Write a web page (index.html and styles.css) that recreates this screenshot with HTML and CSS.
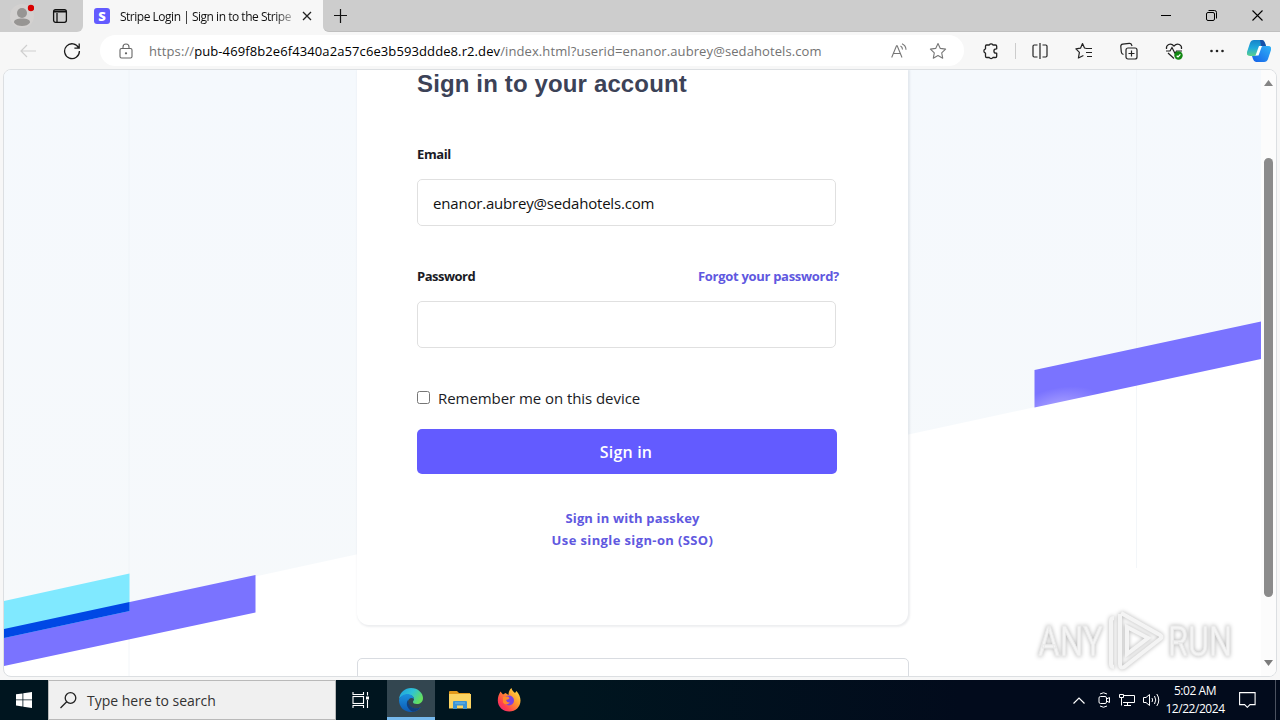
FILE: index.html
```
<!DOCTYPE html>
<html lang="en">
<head>
<meta charset="utf-8">
<title>Desktop</title>
<link rel="stylesheet" href="styles.css">
</head>
<body>

<div class="desktop">
  <!-- Tab strip -->
  <div class="tab-strip">
    <div class="strip-left">
      <svg class="profile" width="24" height="24" viewBox="0 0 24 24">
        <circle cx="12" cy="12" r="12" fill="#d3d1d0"/>
        <circle cx="12" cy="9" r="5" fill="#979593"/>
        <path d="M4 18.500c0-3 3-4 8-4s8 1 8 4c-1.500 2.500-4.500 3.500-8 3.500s-6.500-1-8-3.500z" fill="#979593"/>
        <circle cx="21" cy="4" r="3.200" fill="#d90000"/>
      </svg>
      <svg class="tab-actions" width="16" height="16" viewBox="0 0 16 16" fill="none" stroke="#111" stroke-width="1.300">
        <rect x="1.600" y="1.700" width="12.800" height="12.600" rx="2"/>
        <path d="M2 3.500h12" stroke-width="2"/>
        <path d="M5 5v9"/>
      </svg>
    </div>
    <div class="tab">
      <span class="favicon">S</span>
      <span class="tab-title">Stripe Login | Sign in to the Stripe</span>
      <svg width="10" height="10" viewBox="0 0 10 10" stroke="#222" stroke-width="1.300"><path d="M1 1l8 8M9 1l-8 8"/></svg>
    </div>
    <div class="strip-rest">
      <svg width="14" height="14" viewBox="0 0 14 14" stroke="#111" stroke-width="1.200"><path d="M6.500 0v14M0 6.500h13"/></svg>
      <div class="window-buttons">
        <svg width="10" height="11" viewBox="0 0 10 11" stroke="#000"><path d="M0 5.500h10"/></svg>
        <svg width="11" height="11" viewBox="0 0 11 11" fill="none" stroke="#000"><rect x=".5" y="2.500" width="8" height="8" rx="1.500"/><path d="M2.500 .5h6q2 0 2 2v6"/></svg>
        <svg width="11" height="11" viewBox="0 0 11 11" stroke="#000" stroke-width="1.100"><path d="M.5 .5l10 10M10.500 .5l-10 10"/></svg>
      </div>
    </div>
  </div>

  <!-- Toolbar -->
  <div class="toolbar">
    <svg class="back" width="16" height="14" viewBox="0 0 16 14" fill="none" stroke="#cfcfcf" stroke-width="1.200"><path d="M16 7H1M7 1L1 7l6 6"/></svg>
    <svg class="reload" width="18" height="18" viewBox="0 0 18 18" fill="none" stroke="#1b1b1b" stroke-width="1.300"><path d="M15.700 6A7.400 7.400 0 1 0 16.400 9M16.200 1.500V6.200h-4.800"/></svg>
    <div class="address">
      <svg width="14" height="16" viewBox="0 0 14 16" fill="none" stroke="#666" stroke-width="1.100"><rect x="1" y="5.500" width="12" height="9.500" rx="1.500"/><path d="M4 5.500V4a3 3 0 0 1 6 0v1.500"/><circle cx="7" cy="10.300" r=".6" fill="#666"/></svg>
      <span class="url">https://<b>pub-469f8b2e6f4340a2a57c6e3b593ddde8.r2.dev</b>/index.html?userid=enanor.aubrey@sedahotels.com</span>
      <svg class="read-aloud" width="16" height="16" viewBox="0 0 16 16" fill="none" stroke="#777" stroke-width="1.100"><path d="M.7 14.500L5.500 2.700h.7L11 14.500M2.300 10.500h7M9.500 3q2 1 2 3.500M11 .7q4 1.800 4 6"/></svg>
      <svg width="18" height="18" viewBox="0 0 18 18" fill="none" stroke="#777" stroke-width="1.100" stroke-linejoin="round"><path d="M9 1.500l2.300 4.900 5.300.7-3.900 3.700 1 5.400L9 13.600l-4.700 2.600 1-5.400L1.400 7.100l5.300-.7z"/></svg>
    </div>
    <div class="tools">
      <svg width="18" height="18" viewBox="0 0 18 18" fill="none" stroke="#222" stroke-width="1.300" stroke-linejoin="round"><path d="M4.500 3H7.300a2 2 0 0 1 3.600 0H13.500q1.200 0 1.200 1.200v2.600h-.6a2.200 2.200 0 0 0 0 4.400h.6v3.100q0 1.200-1.200 1.200h-2.600a2 2 0 0 1-3.600 0H4.700q-1.200 0-1.200-1.200v-3.100a2.300 2.300 0 0 1 0-4.400V4.200Q3.500 3 4.500 3z"/></svg>
      <span class="divider"></span>
      <svg width="16" height="16" viewBox="0 0 16 16" fill="none" stroke="#222" stroke-width="1.200"><path d="M5.500 2H2.200Q1 2 1 3.200v9.600Q1 14 2.200 14h3.300M10.500 2h3.300q1.200 0 1.200 1.200v9.600q0 1.200-1.200 1.200h-3.300M8 0v16"/></svg>
      <svg width="18" height="18" viewBox="0 0 18 18" fill="none" stroke="#222" stroke-width="1.200" stroke-linejoin="round"><path d="M11 6.500H17M11 10.500h6M12 14.500h5M11.500 6.500L9.500 6 7.500 1.500l-2 4.700-4.600.7 3.500 3.500-1 5.600 5-2.500"/></svg>
      <svg width="18" height="18" viewBox="0 0 18 18" fill="none" stroke="#222" stroke-width="1.200"><rect x="6" y="6" width="11" height="11" rx="2"/><path d="M11.500 8.500v6M8.500 11.500h6M3.500 12.500Q1.500 12 1.300 10L.8 4.500Q.7 2.500 2.700 2.200l6.500-.9q2-.2 2.500 1.700l.3 1"/></svg>
      <svg width="18" height="18" viewBox="0 0 18 18" fill="none" stroke="#222" stroke-width="1.200"><path d="M1.500 7C.8 3 5.500.2 9 4c3.500-3.800 8.200-1 7.500 3M1 9h4l2-3.500 3 6L11.500 9H17M3 11l6 5.500"/><circle cx="13.500" cy="13.500" r="4.200" fill="#128712" stroke="none"/><path d="M11.700 13.700l1.300 1.200 2.400-2.600" stroke="#fff"/></svg>
      <svg width="14" height="4" viewBox="0 0 14 4" fill="#222"><circle cx="1.500" cy="2" r="1.300"/><circle cx="7" cy="2" r="1.300"/><circle cx="12.500" cy="2" r="1.300"/></svg>
      <svg class="copilot" width="24" height="22" viewBox="0 0 24 22">
        <defs>
          <linearGradient id="cpA" x1="0" y1="0" x2="0" y2="1"><stop offset="0" stop-color="#1683c9"/><stop offset=".5" stop-color="#20a9dc"/><stop offset="1" stop-color="#5bd08c"/></linearGradient>
          <linearGradient id="cpB" x1="1" y1="0" x2="0" y2="1"><stop offset="0" stop-color="#2fb3f7"/><stop offset="1" stop-color="#155fe8"/></linearGradient>
        </defs>
        <path d="M7 0h8q2 0 3 3l1 3h-3q-2 0-3 2l-2 5q-1 3-4 3H3q-4 0-3-4L3 3q1-3 4-3z" fill="url(#cpA)"/>
        <path d="M13 0h2q2 0 3 3l1 3h-5z" fill="#164fa8"/>
        <path d="M17 22H9q-2 0-3-3l-1-3h3q2 0 3-3l2-5q1-2 3-2h5q4 0 3 4l-3 9q-1 3-4 3z" fill="url(#cpB)"/>
        <path d="M12 6h3l-3.500 9.500h-3z" fill="#fff"/>
      </svg>
    </div>
  </div>

  <!-- Page -->
  <div class="viewport">
    <div class="page">
      <svg class="backdrop" width="1257" height="607" viewBox="4 70 1257 607">
        <defs>
          <linearGradient id="sky" x1="0" y1="0" x2="0" y2="1"><stop offset="0" stop-color="#f5f9fd"/><stop offset="1" stop-color="#f6f9fb"/></linearGradient>
          <radialGradient id="glow" gradientUnits="userSpaceOnUse" cx="0" cy="0" r="1" gradientTransform="translate(1058 408) rotate(-12) scale(44 20)"><stop offset="0" stop-color="#aaa2ff"/><stop offset="1" stop-color="#7a73ff"/></radialGradient>
        </defs>
        <path d="M4 70H1261V358L4 631z" fill="url(#sky)"/>
        <path d="M129 70V677M1136.500 70V568" stroke="#eef2f6" stroke-opacity=".7"/>
        <path d="M4 629L255.500 575V612.500L4 666z" fill="#7a73ff"/>
        <path d="M4 601L129.500 573.500V611L4 638z" fill="#80e9ff"/>
        <path d="M4 629L129.500 602V611L4 638z" fill="#0048e5"/>
        <path d="M1034.500 370L1261 321.500V359L1034.500 407.500z" fill="url(#glow)"/>
      </svg>
      <div class="card">
        <h1>Sign in to your account</h1>
        <label class="email-label" for="email">Email</label>
        <input class="field" id="email" type="text" value="enanor.aubrey@sedahotels.com">
        <div class="label-row">
          <label for="password">Password</label>
          <a class="forgot">Forgot your password?</a>
        </div>
        <input class="field" id="password" type="password">
        <div class="remember">
          <input type="checkbox" id="remember">
          <label for="remember">Remember me on this device</label>
        </div>
        <button class="submit" type="button">Sign in</button>
        <div class="links">
          <a class="passkey">Sign in with passkey</a>
          <a class="sso">Use single sign-on (SSO)</a>
        </div>
      </div>
      <div class="card-next"></div>
    </div>
    <div class="scrollbar">
      <svg width="9" height="6" viewBox="0 0 9 6"><path d="M0 6L4.500 0 9 6z" fill="#858585"/></svg>
      <div class="thumb"></div>
      <svg width="9" height="6" viewBox="0 0 9 6"><path d="M0 0h9L4.500 6z" fill="#7b7b7b"/></svg>
    </div>
  </div>

  <!-- Taskbar -->
  <div class="taskbar">
    <div class="start">
      <svg width="16" height="16" viewBox="0 0 16 16" fill="#fff"><path d="M0 2.300L6.500 1.400V7.500H0zM7.300 1.300L16 0V7.500H7.300zM0 8.300H6.500V14.500L0 13.600zM7.300 8.300H16V16L7.300 14.700z"/></svg>
    </div>
    <div class="search">
      <svg width="17" height="17" viewBox="0 0 17 17" fill="none" stroke="#222" stroke-width="1.300"><circle cx="10.500" cy="6" r="5.300"/><path d="M6.700 9.800L.5 16"/></svg>
      <span>Type here to search</span>
    </div>
    <div class="app">
      <svg width="17" height="16" viewBox="0 0 17 16" fill="none" stroke="#fff" stroke-width="1.100"><path d="M1 0v2.500h10.500V0M1 16v-2.500h10.500V16M15.500 0v3.500M15.500 8v8"/><rect x="1" y="4.500" width="10.500" height="7"/><path d="M14 4.500h3v3h-3z" fill="#fff" stroke="none"/></svg>
    </div>
    <div class="app active">
      <svg width="24" height="24" viewBox="0 0 24 24">
        <defs>
          <linearGradient id="edA" x1="0" y1="0" x2="1" y2=".5"><stop offset="0" stop-color="#1c9de0"/><stop offset=".55" stop-color="#2fc3d5"/><stop offset="1" stop-color="#63df5f"/></linearGradient>
          <linearGradient id="edB" x1="0" y1="0" x2="0" y2="1"><stop offset="0" stop-color="#1b91de"/><stop offset="1" stop-color="#0d5ab4"/></linearGradient>
        </defs>
        <path d="M0 11C1 4 6 0 12 0c7 0 12 5 12 10 0 4-3 6-6 6-3 0-4-1-4-2s1-1.200 1-3c0-2-2-4-5-4-4 0-8 1-10 4z" fill="url(#edA)"/>
        <path d="M0 12C1 8 5 6 8.500 6 12 6 15 8.500 15 11c-2-2-6-1-6 3 0 4 4 6.500 8 6.500 2 0 3.500-.6 5-1.500C20 22 16 24 12 24 5 24 0 19 0 12z" fill="url(#edB)"/>
        <path d="M9 12c-3 4 0 10 5 11.800 3-.5 6-2 8-4.800-5 3-13 1-13-7z" fill="#123f7c"/>
      </svg>
    </div>
    <div class="app">
      <svg width="22" height="19" viewBox="0 0 22 19"><path d="M0 1q0-1 1-1h7l2 2h11v3H0z" fill="#e39a1b"/><path d="M0 3h22v14.500H0z" fill="#fcd462"/><path d="M4 11q0-1 1-1h12q1 0 1 1v7h-4v-3.500H8V18H4z" fill="#3c94d5"/><path d="M6 12h10" stroke="#6fb9ea"/></svg>
    </div>
    <div class="app">
      <svg width="24" height="24" viewBox="0 0 24 24">
        <defs><linearGradient id="ffA" x1="1" y1="0" x2="0" y2="1"><stop offset="0" stop-color="#fff04a"/><stop offset=".4" stop-color="#ff9a2e"/><stop offset=".75" stop-color="#ff3b4f"/><stop offset="1" stop-color="#e0268f"/></linearGradient></defs>
        <path d="M3.500 3.500L6 6.500 8.500 5l3 2c0-3 1-5.500 3-7 .5 2.500 2 3.500 3.500 5l1.500-2C22 6 23.500 9 23.500 12.500 23.500 19 18.500 23.500 12.300 23.500S.8 19 .8 12.500c0-3.500 1-6 2.700-9z" fill="url(#ffA)"/>
        <circle cx="12" cy="12.500" r="5" fill="#7a42e0"/>
        <path d="M6 9l5-.5q2 1 1 2.500l-3 1q1 3 4 2.500-4 4-7 0z" fill="#ff8a2a"/>
      </svg>
    </div>
    <div class="tray">
      <svg width="12" height="7" viewBox="0 0 12 7" fill="none" stroke="#fff" stroke-width="1.200"><path d="M.5 6.500L6 1l5.500 5.500"/></svg>
      <svg class="meet" width="12" height="16" viewBox="0 0 12 16" fill="none" stroke="#fff"><rect x="1" y="4.500" width="7.500" height="7" rx="1.500"/><path d="M8.500 7L11.500 5.500v5L8.500 9M2 2q3.500-2.500 7 0M2 14q3.500 2.500 7 0"/></svg>
      <svg width="16" height="14" viewBox="0 0 16 14" fill="none" stroke="#fff"><path d="M5 2.500h10.500v7H4M8.500 9.500v3M5 12.500h7M.5 1.500h4v3h-4zM2.500 4.500v8"/></svg>
      <svg class="volume" width="17" height="14" viewBox="0 0 17 14" fill="none" stroke="#fff"><path d="M.5 4.500h2.500l3.500-3v11l-3.500-3H.5zM9 5q1.200 2 0 4M11.500 3q2.500 4 0 8M13.800 1q4 6 0 12"/></svg>
      <div class="clock">
        <span class="time">5:02 AM</span>
        <span>12/22/2024</span>
      </div>
      <svg width="17" height="16" viewBox="0 0 17 16" fill="none" stroke="#fff" stroke-width="1.100"><path d="M.6 .6h15.500v12H11L8.300 15.300 5.600 12.600H.6z"/></svg>
      <span class="peek"></span>
    </div>
  </div>

  <!-- Recorder watermark -->
  <svg class="watermark" width="204" height="70" viewBox="0 0 204 70">
    <g class="wm-text">
      <text x="4" y="51" textLength="65" lengthAdjust="spacingAndGlyphs">ANY</text>
      <text x="134" y="51" textLength="64" lengthAdjust="spacingAndGlyphs">RUN</text>
    </g>
    <g class="wm-mark">
      <path d="M87 8l39 22q3 2 0 4L90 62q-4 2-4-3V9"/>
      <path d="M93 22l21 11-21 16zM80 13q-3 0-3 3v43q0 3 3 3"/>
    </g>
  </svg>
</div>

</body>
</html>
```
FILE: styles.css
```
* {
  box-sizing: border-box;
}

body {
  margin: 0;
  font-family: "Open Sans", "Noto Sans", sans-serif;
  color: #1a1b25;
}

svg {
  display: block;
  flex: none;
}

.desktop {
  position: relative;
  display: flex;
  flex-direction: column;
  width: 1280px;
  height: 720px;
  overflow: hidden;
  background: #f7f7f7;
}

/* Tab strip */
.tab-strip {
  display: flex;
  height: 32px;
  background: #f7f7f7;
}

.strip-left {
  display: flex;
  align-items: center;
  gap: 18px;
  width: 83px;
  padding-left: 10px;
  background: #cdcdcd;
  border-bottom-right-radius: 6px;
}

.tab {
  display: flex;
  align-items: center;
  width: 240px;
  padding: 0 11px;
}

.favicon {
  width: 16px;
  height: 16px;
  border-radius: 3px;
  background: #635bff;
  color: #fff;
  font: 800 13px/16px "Open Sans", sans-serif;
  text-align: center;
}

.tab-title {
  width: 175px;
  margin: 0 8px 0 10px;
  white-space: nowrap;
  font-size: 12px;
  letter-spacing: -0.48px;
  color: #111;
  -webkit-mask-image: linear-gradient(90deg, #000 155px, transparent 180px);
}

.strip-rest {
  display: flex;
  flex: 1;
  align-items: center;
  justify-content: space-between;
  padding: 0 17px 0 11px;
  background: #cdcdcd;
  border-bottom: 1px solid #bfbfbf;
  border-bottom-left-radius: 6px;
}

.window-buttons {
  display: flex;
  gap: 35px;
}

/* Toolbar */
.toolbar {
  display: flex;
  align-items: center;
  height: 37px;
  padding-left: 20px;
}

.reload {
  margin-left: 27px;
}

.address {
  display: flex;
  align-items: center;
  width: 864px;
  height: 31px;
  margin-left: 19px;
  padding: 0 17px 0 19px;
  border-radius: 16px;
  background: #fff;
}

.url {
  flex: 1;
  margin-left: 16px;
  font-size: 13px;
  letter-spacing: 0.1px;
  white-space: nowrap;
  color: #737373;
}

.url b {
  font-weight: 400;
  color: #000;
}

.read-aloud {
  margin-right: 22px;
}

.tools {
  display: flex;
  flex: 1;
  align-items: center;
  padding-left: 18px;
}

.tools svg {
  margin-right: 27px;
}

.tools svg:first-child {
  margin-right: 15px;
}

.tools svg:nth-last-child(2) {
  margin-right: 23px;
}

.tools .copilot {
  margin-right: 0;
}

.divider {
  width: 1px;
  height: 16px;
  margin-right: 16px;
  background: #ccc;
}

/* Page */
.viewport {
  display: flex;
  width: 1274px;
  height: 608px;
  margin-left: 3px;
  border: 1px solid #dcdfe2;
  border-radius: 8px;
  overflow: hidden;
  background: #fff;
}

.page {
  position: relative;
  width: 1257px;
  padding-left: 353px;
}

.backdrop {
  position: absolute;
  left: 0;
  top: 0;
}

.card {
  position: relative;
  width: 551px;
  height: 555px;
  padding: 0 60px;
  border-radius: 0 0 12px 12px;
  background: #fff;
  box-shadow: 1px 1px 2px 1px rgba(60, 66, 87, 0.09);
}

h1 {
  margin: 0;
  font: bold 24px/28px "Liberation Sans", Arial, sans-serif;
  letter-spacing: 0.14px;
  color: #3c4257;
}

.card label {
  display: block;
  font-size: 13px;
  font-weight: 700;
  line-height: 20px;
  letter-spacing: -0.5px;
  color: #1a1b25;
}

.card .email-label {
  margin-top: 46px;
  letter-spacing: -0.4px;
}

.field {
  display: block;
  width: 419px;
  height: 47px;
  margin-top: 15px;
  padding: 1px 15px;
  border: 1px solid #e0e0e0;
  border-radius: 5px;
  outline: none;
  background: #fff;
  font: 15px "Open Sans", sans-serif;
  letter-spacing: -0.19px;
  color: #111;
}

.label-row {
  display: flex;
  justify-content: space-between;
  width: 422px;
  margin-top: 40px;
}

.card a {
  font-size: 13px;
  font-weight: 700;
  line-height: 20px;
  color: #6058e0;
}

.card .forgot {
  letter-spacing: -0.3px;
}

.remember {
  display: flex;
  align-items: center;
  height: 22px;
  margin-top: 39px;
}

.remember input {
  width: 13px;
  height: 13px;
  margin: -2px 8px 0 0;
}

.card .remember label {
  font-size: 15px;
  font-weight: 400;
  letter-spacing: -0.06px;
}

.submit {
  display: block;
  width: 420px;
  height: 45px;
  margin-top: 20px;
  padding: 1px 2px 0 0;
  border: 0;
  border-radius: 5px;
  background: #635bff;
  color: #fff;
  font: 600 16px "Open Sans", sans-serif;
  letter-spacing: 0.2px;
}

.links {
  display: flex;
  flex-direction: column;
  align-items: center;
  gap: 2px;
  margin-top: 34px;
}

.card .passkey {
  letter-spacing: 0.15px;
}

.card .sso {
  letter-spacing: 0.38px;
}

.card-next {
  position: relative;
  width: 552px;
  height: 40px;
  margin-top: 33px;
  border: 1px solid #d9dce1;
  border-radius: 5px;
  background: #fff;
}

.scrollbar {
  display: flex;
  flex-direction: column;
  align-items: center;
  width: 15px;
  padding: 10px 0;
  background: #fcfcfc;
}

.thumb {
  width: 9px;
  height: 440px;
  margin: 72px 0 63px;
  border-radius: 5px;
  background: #8b8b8b;
}

/* Taskbar */
.taskbar {
  display: flex;
  height: 40px;
  margin-top: 3px;
  background: linear-gradient(90deg, #00151f 0%, #00151f 45%, #020b1c 75%, #020b1c 100%);
}

.start, .app {
  display: flex;
  align-items: center;
  justify-content: center;
  width: 48px;
}

.app {
  width: 49px;
}

.app.active {
  width: 48px;
  margin-left: 2px;
  background: #334650;
  border-bottom: 3px solid #76b9ed;
  padding-top: 3px;
}

.search {
  display: flex;
  align-items: center;
  gap: 10px;
  width: 288px;
  padding-left: 11px;
  border: 1px solid #b9b9b9;
  background: #f0f0f0;
  font-size: 14px;
  color: #333;
}

.tray {
  display: flex;
  align-items: center;
  margin-left: auto;
}

.meet {
  margin: 0 9px 0 13px;
}

.volume {
  margin-left: 8px;
}

.clock {
  display: flex;
  flex-direction: column;
  align-items: center;
  width: 58px;
  margin: 0 15px 0 6px;
  font-size: 12px;
  line-height: 18px;
  letter-spacing: -0.45px;
  white-space: nowrap;
  color: #fff;
}

.peek {
  width: 1px;
  height: 40px;
  margin: 0 4px 0 19px;
  background: #4b5260;
}

/* Lies over the page corner */
.watermark {
  position: absolute;
  left: 1034px;
  top: 605px;
  filter: drop-shadow(0 0 2px rgba(0, 0, 0, 0.3));
}

.wm-text {
  font: 400 43px "Liberation Sans Narrow", Roboto, sans-serif;
  fill: #f4f4f4;
  stroke: #e9e9e9;
  stroke-width: 1;
}

.wm-mark {
  fill: none;
  stroke: #f4f4f4;
  stroke-width: 4;
}
```
